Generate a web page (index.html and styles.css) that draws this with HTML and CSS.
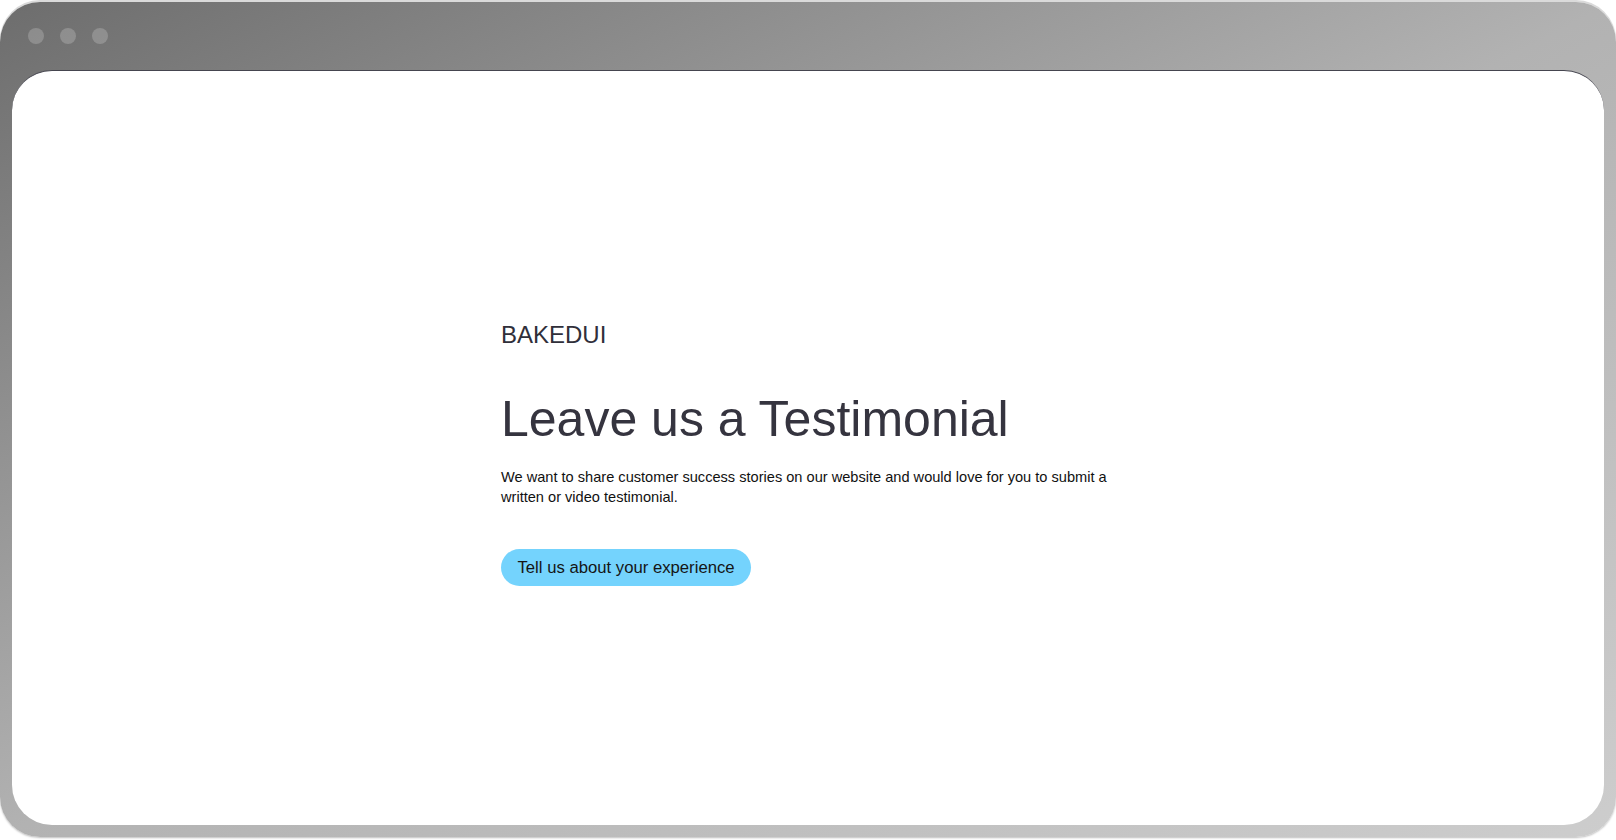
FILE: index.html
```html
<!DOCTYPE html>
<html lang="en">
<head>
<meta charset="utf-8">
<title>BAKEDUI – Leave us a Testimonial</title>
<link rel="stylesheet" href="styles.css">
</head>
<body>
  <div class="window">
    <div class="toolbar">
      <span class="dot"></span>
      <span class="dot"></span>
      <span class="dot"></span>
    </div>
    <main class="viewport">
      <section class="hero">
        <div class="brand">BAKEDUI</div>
        <h1 class="title">Leave us a Testimonial</h1>
        <p class="lead">We want to share customer success stories on our website and would love for you to submit a written or video testimonial.</p>
        <button class="cta" type="button">Tell us about your experience</button>
      </section>
    </main>
  </div>
</body>
</html>
```

FILE: styles.css
```css
* {
  box-sizing: border-box;
}

html, body {
  margin: 0;
  padding: 0;
  background: #ffffff;
}

body {
  font-family: "Liberation Sans", Arial, sans-serif;
  width: 1616px;
  height: 840px;
  overflow: hidden;
}

.window {
  margin-top: 2px;
  height: 835px;
  border-radius: 40px;
  background: linear-gradient(to bottom right, #6d6d6d 0%, #b2b2b2 50%, #cdcdcd 100%);
  box-shadow: 0 -2px 0 #dadada, 0 1px 2px rgba(0, 0, 0, 0.25);
  display: flex;
  flex-direction: column;
  padding: 0 12px 12px;
}

.toolbar {
  height: 68px;
  flex: none;
  display: flex;
  align-items: center;
  gap: 16px;
  padding-left: 16px;
}

.dot {
  width: 16px;
  height: 16px;
  border-radius: 50%;
  background: rgba(255, 255, 255, 0.2);
}

.viewport {
  flex: 1;
  background: #ffffff;
  border-top: 1px solid #45454f;
  border-radius: 40px;
  padding-top: 252px;
}

.hero {
  width: 614px;
  margin: 0 auto;
}

.brand {
  font-size: 24px;
  line-height: 24px;
  color: #302f3a;
  margin-bottom: 47px;
}

.title {
  font-size: 50px;
  line-height: 50px;
  font-weight: 400;
  color: #35343f;
  margin: 0 0 23px;
}

.lead {
  font-size: 14.6px;
  line-height: 20px;
  color: #111111;
  margin: 0 0 42px;
}

.cta {
  font-family: inherit;
  font-size: 16.7px;
  line-height: 19px;
  padding: 9px 16.5px;
  border: none;
  border-radius: 999px;
  background: #74d3fd;
  color: #151515;
  cursor: pointer;
}
```
